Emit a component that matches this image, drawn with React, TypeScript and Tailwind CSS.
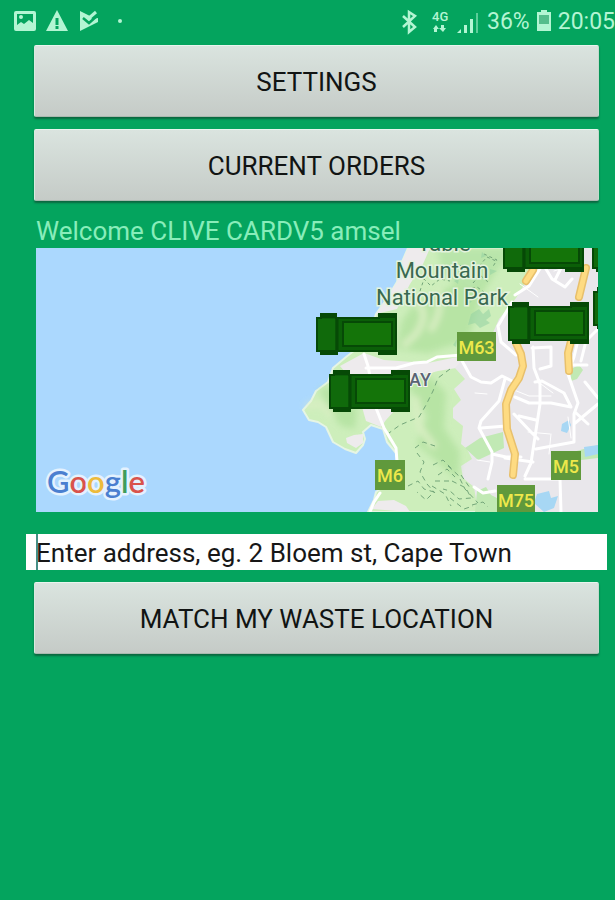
import React from "react";

type Point = { x: number; y: number };

const trucks: Point[] = [
  { x: 316, y: 313 },
  { x: 329, y: 370 },
  { x: 592, y: 230 },
  { x: 503, y: 230 },
  { x: 508, y: 302 },
  { x: 593, y: 287 },
];

const shields = [
  { x: 457, y: 332, w: 39, h: 29, label: "M63" },
  { x: 375, y: 460, w: 30, h: 30, label: "M6" },
  { x: 551, y: 451, w: 30, h: 29, label: "M5" },
  { x: 497, y: 485, w: 38, h: 30, label: "M75" },
];

const googleLetters = [
  ["G", "#4a7fd0"],
  ["o", "#d9534c"],
  ["o", "#edbb3c"],
  ["g", "#4a7fd0"],
  ["l", "#3f9d5c"],
  ["e", "#d9534c"],
];

function Truck({ x, y }: Point) {
  return (
    <g transform={`translate(${x} ${y})`} stroke="#064906" strokeWidth="2">
      <path d="M5 1h15v4h43V1h17v40H63v-3H21v3H5v-3H1V5h4z" fill="#0b5f08" />
      <path d="M5 1h15v3H5zM63 1h17v3H63zM5 38h16v3H5zM63 38h17v3H63z" fill="#064906" />
      <rect x="2" y="6" width="17" height="31" fill="#106a0b" stroke="none" />
      <path d="M21 4v34" strokeWidth="3" />
      <rect x="27" y="9" width="49" height="24" fill="#147409" />
    </g>
  );
}

function MapView() {
  return (
    <svg
      role="img"
      aria-label="Map of Cape Town"
      viewBox="36 248 562 264"
      preserveAspectRatio="xMaxYMid slice"
      className="block h-66 w-full font-['Roboto',sans-serif]"
    >
      <defs>
        <filter id="terrain" x="-20%" y="-20%" width="140%" height="140%">
          <feGaussianBlur stdDeviation="3" />
        </filter>
      </defs>
      <rect x="36" y="248" width="562" height="264" fill="#abd8fe" />
      <path
        d="M408 248L402 262 397 282 386 300 376 314 368 340 346 357 333 368 328 382 316 391 311 401 303 410 309 420 318 422 326 427 333 442 345 449 356 453 363 445 365 439 363 432 371 425 383 429 387 442 396 453 398 464 392 480 376 492 374 500 368 512H598V248z"
        fill="#cdeebb"
        stroke="#e6f5e4"
        strokeWidth="2"
        strokeLinejoin="round"
      />
      <path
        d="M408 248L402 262 397 282 386 300 376 314 397 309 410 284 423 264 430 248zM340 366L364 353 384 360 428 363 462 356 462 367 438 371 416 377 402 393 396 409 386 420 381 427 366 421 360 400 355 384zM346 438l8-3 9-1 0 9-7 5-9-5zM372 509l6-8 16-1 12 6 4 6z"
        fill="#eeebed"
      />
      <path
        d="M598 248V512H478L474 487 463 478 461 466 472 459 467 449 461 444 463 426 453 418 453 408 461 400 454 389 465 379 455 368 462 360 496 348 492 335 499 319 516 298 533 270 545 248z"
        fill="#e9e7eb"
      />
      <g filter="url(#terrain)" opacity=".65">
        <path d="M402 321l14-20 33-13 30-24 22 0-18 28-15 48-40 13-32-4zM407 384l23-8 16 17-2 35 16 24-2 28-25-22-16-14 10-28zM319 389l20-3 18 25-2 18-14-3-11-14z" fill="#acdf99" />
        <path d="M437 248l69 0 0 13-34 30-29-17z" fill="#afe1a2" />
        <path d="M415 301q16 11 1 33l-13 12M438 289q6 22-8 42M306 407q17-9 26 10M416 397l3 29 16 22" fill="none" stroke="#e0efc8" strokeWidth="6" />
      </g>
      <path d="M465 448L480 438 503 432 504 448 478 460zM571 369l8-4 4 5-6 9-6 2zM573 452l25-7v13l-25 3zM477 491l9-4 5 8 6 3 1 14h-23z" fill="#c1e9b4" />
      <path d="M562 424l7-4 2 5-4 8-6-2zM584 447l14-2v9l-13 3zM537 494l12-3 2 7 7-2-4 12-10 4-10-9z" fill="#a7d7f4" />
      <g fill="none" stroke="#fff" strokeWidth="3" strokeLinecap="round" strokeLinejoin="round">
        <path d="M364 354l4 12 8 42 8 20 12 20 1 14M380 493l-6 9-4 10M366 368l30 0 18-5 13-1 10-5 25-2" />
        <path d="M461 359l10 18 10 5 10 1 11-7 10 5M512 302l-14 24 3 16 15 13M505 379l-6 22-18 20-2 7 13 24 0 10-4 17M481 428l25-2M492 454l14 3 15 0" />
        <path d="M533 347l1 21 6 16 0 20-9 59-6 13M515 397l14 6 22 0 20 4-7-14-22-12-7 1M514 414l17 18 7 7M519 416l17 4M536 449l38-7 0-28 4-11-10-29M574 424l24-20M585 382l13 16M575 412l13 12M525 479l35 0 1 33M548 250l-5 14 9 15 13 8 7-8M543 264l-14 22-14 9M564 262l-9 18M579 336l-5 21-3 8 16 0M532 348l19-1 0 19-11 3M598 329l-12 12-5 20M533 462l-28-4M474 487l9 6 12-2" />
      </g>
      <g fill="none" stroke="#fff" strokeWidth="1" strokeLinecap="round">
        <path d="M520 284l18 13M541 384l12 9M514 390l15 6 22 0M528 432l22 2M551 434l-2 20M568 417l3 21M477 460l13 2M554 271l20-6M475 393l12 1" />
      </g>
      <g fill="none" strokeLinecap="round" strokeLinejoin="round">
        <path d="M533 270l-7 11M586 268l-7 29M516 343l5 11 2 12-4 12-8 12-5 14 1 25 8 25-2 21M571 341l-3 12 1 18" stroke="#e8c06c" strokeWidth="8" />
        <path d="M533 270l-7 11M586 268l-7 29M516 343l5 11 2 12-4 12-8 12-5 14 1 25 8 25-2 21M571 341l-3 12 1 18" stroke="#fedb82" strokeWidth="5" />
      </g>
      <g fill="none" stroke="#73a579" strokeWidth="1" strokeDasharray="5 4">
        <path d="M450 369l-12 9-5 13-7 14-7 12-19 8-11 8M415 448l8-6 12 4M417 453l7 9-4 10 7 12 8 9M433 465l10-5 10 10M438 475l9-6 8 8M435 481l14 0M432 486l13 8 6 12M408 486l10-5 6 8 10 3-8 8-9-8M448 466l10 9 7 14 13 14M452 481l14 7 5 10-12 1-9-8-7-2M461 475l9 13M450 498l14 11 9-3M472 505l11-3 5 5" />
        <path d="M420 291l4-12 7 7 9-7 10 2M443 270l13-7 10 6M473 283l7-8 8 7M479 266l8-9 9 4M484 254l13 6-5 8M466 290l11-3 7 5" strokeDasharray="3 3" />
      </g>
      <g fill="#94d2a2" opacity=".55">
        <path d="M471 314l8-5 4 5 6-5 2 7-5 4 4 3-10 5-5-5-7 2zM453 345l4-6-1 8zM466 299l6 2-5 5zM482 252l4 4-5 2zM490 269l7 2-7 4zM454 281l5-3-1 6z" />
      </g>
      <g
        fill="#39694f"
        stroke="#e4f3df"
        strokeWidth="3"
        paintOrder="stroke"
        fontSize="22"
        textAnchor="middle"
      >
        <text x="444" y="251">Table</text>
        <text x="442" y="278">Mountain</text>
        <text x="442" y="305">National Park</text>
      </g>
      <text x="431" y="386" fontSize="18" fontWeight="500" textAnchor="end" fill="#596474" stroke="#f3f5f2" strokeWidth="2" paintOrder="stroke">
        BAY
      </text>
      {shields.map((s) => (
        <g key={s.label}>
          <rect x={s.x} y={s.y} width={s.w} height={s.h} fill="#60993c" />
          <text x={s.x + s.w / 2} y={s.y + 22} textAnchor="middle" fontSize="18" fontWeight="500" fill="#eee84b">
            {s.label}
          </text>
        </g>
      ))}
      {trucks.map((t) => (
        <Truck key={`${t.x}-${t.y}`} {...t} />
      ))}
      <text x="47" y="493" fontSize="31" fontWeight="600" stroke="#e4f2fe" strokeWidth="5" strokeLinejoin="round" paintOrder="stroke" className="font-['Lato',sans-serif]">
        {googleLetters.map(([letter, color], i) => (
          <tspan key={i} fill={color}>
            {letter}
          </tspan>
        ))}
      </text>
    </svg>
  );
}

function StatusBar() {
  return (
    <header className="flex h-11 items-center justify-between overflow-hidden pl-3.5 text-[#b3f5d3]">
      <svg width="112" height="24" viewBox="0 1 112 24" fill="currentColor" aria-hidden="true">
        <path fillRule="evenodd" d="M2 2h18q2 0 2 2v16q0 2-2 2H2q-2 0-2-2V4q0-2 2-2zM3 5v11l4-3 3 2 5-4 4 3V5z" />
        <circle cx="7" cy="8" r="2" />
        <path fillRule="evenodd" d="M43 1L54 22H32zM41.500 9v7h3V9zM41.500 17v3h3v-3z" />
        <path d="M66 2l10 5 2 3 6-1v4L66 22z" />
        <path d="M69 9l6 5 9-8" fill="none" stroke="#04a45e" strokeWidth="2.500" />
        <path d="M75 9l7-6" stroke="currentColor" strokeWidth="3" />
        <circle cx="106" cy="12" r="2" />
      </svg>
      <div className="flex shrink-0 items-center text-[23px] leading-7">
        <svg width="86" height="26" viewBox="402 8 86 26" fill="none" stroke="currentColor" aria-hidden="true">
          <path d="M404 15l12 11-6 5V11l6 4-12 11" strokeWidth="2.500" />
          <g fill="currentColor" stroke="none">
            <text x="433" y="20" fontSize="13" fontWeight="500" className="font-['Roboto',sans-serif]">4G</text>
            <path d="M437 24l3 4h-2v3h-3v-3h-1zM444 31l-4-4h2v-3h3v3h2z" />
            <path d="M458 32l4-4v4zM465 24h3v8h-3zM471 18h3v14h-3z" />
            <path d="M477 12h2v20h-2z" opacity=".5" />
          </g>
        </svg>
        <span>36%</span>
        <svg width="16" height="24" viewBox="0 1 16 24" className="mx-1.5 shrink-0" aria-hidden="true">
          <path d="M5 1h6v2h4v19H1V3h4z" fill="currentColor" />
          <path d="M3 6h10v9H3z" fill="#55bd8c" />
        </svg>
        <time>20:05</time>
      </div>
    </header>
  );
}

function ActionButton({ children }: { children: React.ReactNode }) {
  return (
    <button
      type="button"
      className="block h-18 w-full rounded-xs border border-t-[#e8f5ee] border-r-[#c4dacd] border-b-[#a9b9af] border-l-[#d9eae0] bg-linear-to-b from-[#dae4df] to-[#c5cbc7] pt-0.5 text-[26px] leading-8 text-[#111413] shadow-[0_2px_2px_#0b6840]"
    >
      {children}
    </button>
  );
}

export default function App() {
  return (
    <div className="min-h-screen overflow-hidden bg-[#04a45e] font-['Roboto',sans-serif]">
      <StatusBar />
      <main className="px-4 pt-px pl-8.5">
        <div className="flex flex-col gap-3">
          <ActionButton>SETTINGS</ActionButton>
          <ActionButton>CURRENT ORDERS</ActionButton>
        </div>
        <section className="mt-3 mr-px ml-0.5">
          <h1 className="h-[35px] text-[26px] leading-9 whitespace-nowrap text-[#88edba]">Welcome CLIVE CARDV5 amsel</h1>
          <MapView />
        </section>
        <form className="mt-5.5" onSubmit={(e) => e.preventDefault()}>
          <div className="relative -mx-2 mb-3">
            <input
              type="text"
              aria-label="Address"
              placeholder="Enter address, eg. 2 Bloem st, Cape Town"
              className="block h-9 w-full bg-white pt-0.5 pl-2.5 text-[26px] leading-9 text-black outline-none placeholder:text-[#171717] placeholder:opacity-100"
            />
            <span className="absolute inset-y-0 left-2.5 w-0.5 bg-[#458f86]" aria-hidden="true" />
          </div>
          <ActionButton>MATCH MY WASTE LOCATION</ActionButton>
        </form>
      </main>
    </div>
  );
}
